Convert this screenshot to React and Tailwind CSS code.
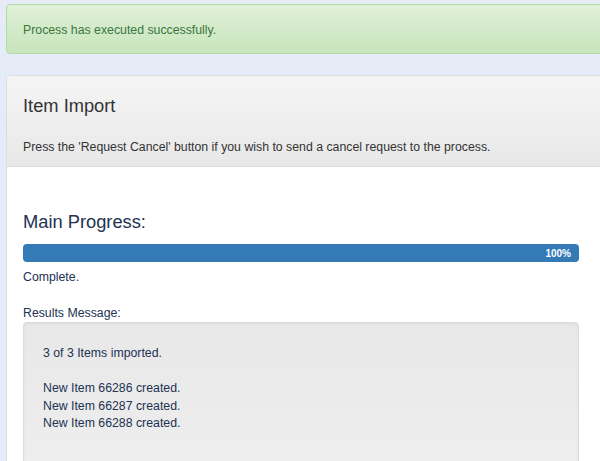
export default function App() {
  return (
    <div
      className="h-[461px] w-[600px] overflow-hidden bg-[#e5ecf8] pl-[6px] pt-[4px]"
      style={{ fontFamily: '"Liberation Sans", Arial, sans-serif' }}
    >
      <div className="-mr-[20px] rounded-[4px] border border-[#b2dba1] bg-gradient-to-b from-[#dff0d8] to-[#c8e5bc] pb-[14px] pl-[16px] pt-[17px] text-[12.3px] leading-[17px] text-[#3c763d]">
        Process has executed successfully.
      </div>

      <div className="-mr-[20px] mt-[21px] rounded-tl-[4px] border border-[#dddddd] bg-white">
        <div className="border-b border-[#dddddd] bg-gradient-to-b from-[#f5f5f5] to-[#e8e8e8] pb-[10px] pl-[16px] pt-[20px] text-[#333333]">
          <div className="text-[18.3px] leading-[20px]">Item Import</div>
          <div className="mt-[23px] text-[12.3px] leading-[17px]">
            Press the 'Request Cancel' button if you wish to send a cancel request to the process.
          </div>
        </div>

        <div className="pl-[16px] pt-[45px] text-[#233253]">
          <div className="w-[556px]">
            <div className="text-[18.3px] leading-[20px]">Main Progress:</div>
            <div className="mt-[12px] flex h-[18px] items-center justify-end rounded-[4px] bg-[#337ab7] pr-[8px] text-[10px] font-bold text-white">
              100%
            </div>
            <div className="mt-[7px] text-[12.3px] leading-[17px]">Complete.</div>
            <div className="mt-[19px] text-[12.3px] leading-[17px]">Results Message:</div>
            <div className="h-[200px] rounded-[4px] border border-[#dcdcdc] bg-gradient-to-b from-[#e8e8e8] to-[#f0f0f0] pl-[19px] pt-[22px] text-[12.3px] leading-[17.5px] shadow-[inset_0_1px_3px_rgba(0,0,0,0.05)]">
              <div>3 of 3 Items imported.</div>
              <div>&nbsp;</div>
              <div>New Item 66286 created.</div>
              <div>New Item 66287 created.</div>
              <div>New Item 66288 created.</div>
            </div>
          </div>
        </div>
      </div>
    </div>
  );
}
